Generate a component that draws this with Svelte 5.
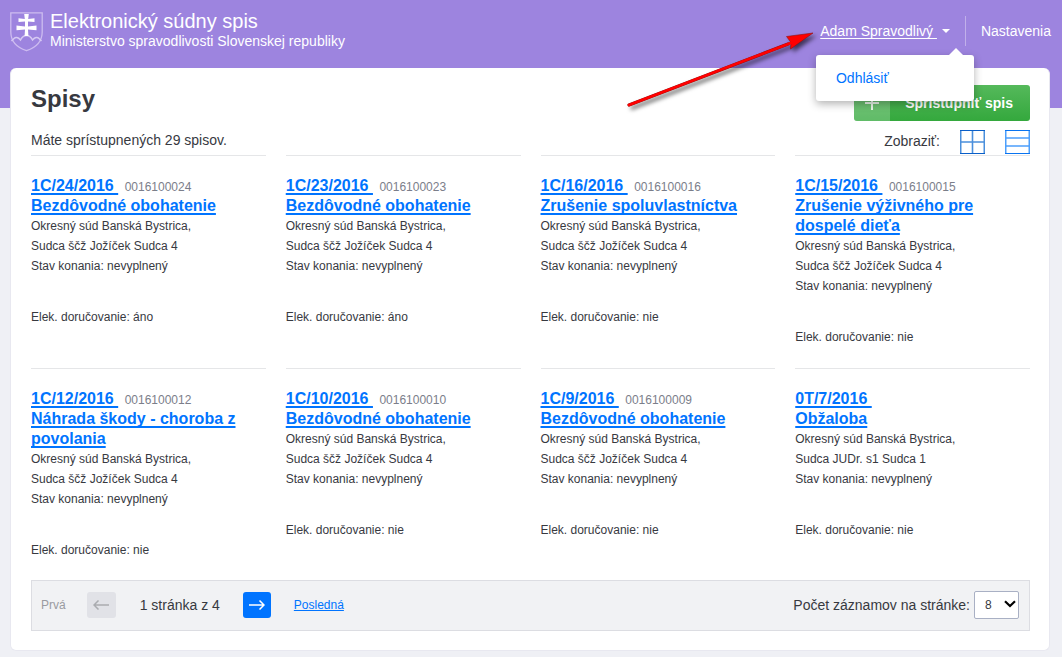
<script>
  const cases = [
    { mark: '1C/24/2016', number: '0016100024', title: 'Bezdôvodné obohatenie', judge: 'Sudca ščž Jožíček Sudca 4', delivery: 'áno' },
    { mark: '1C/23/2016', number: '0016100023', title: 'Bezdôvodné obohatenie', judge: 'Sudca ščž Jožíček Sudca 4', delivery: 'áno' },
    { mark: '1C/16/2016', number: '0016100016', title: 'Zrušenie spoluvlastníctva', judge: 'Sudca ščž Jožíček Sudca 4', delivery: 'nie' },
    { mark: '1C/15/2016', number: '0016100015', title: 'Zrušenie výživného pre dospelé dieťa', judge: 'Sudca ščž Jožíček Sudca 4', delivery: 'nie' },
    { mark: '1C/12/2016', number: '0016100012', title: 'Náhrada škody - choroba z povolania', judge: 'Sudca ščž Jožíček Sudca 4', delivery: 'nie' },
    { mark: '1C/10/2016', number: '0016100010', title: 'Bezdôvodné obohatenie', judge: 'Sudca ščž Jožíček Sudca 4', delivery: 'nie' },
    { mark: '1C/9/2016', number: '0016100009', title: 'Bezdôvodné obohatenie', judge: 'Sudca ščž Jožíček Sudca 4', delivery: 'nie' },
    { mark: '0T/7/2016', number: '', title: 'Obžaloba', judge: 'Sudca JUDr. s1 Sudca 1', delivery: 'nie' }
  ];
  const nbsp = '\u00a0';
  let pageSize = $state('8');
</script>

<div class="page">
  <header class="top">
    <a class="brand" href="#home">
      <svg class="crest" viewBox="0 0 34 40" width="34" height="40" aria-hidden="true">
        <path d="M.8 .8H32.2V20C32.2 29.500 26 35.500 16.500 38.700C7 35.500 .8 29.500 .8 20Z" fill="none" stroke="#cdbcf0" stroke-width="1.300" />
        <path d="M1.500 29L4 26.500C5.500 25 8 25 10.500 28C12 25 14 23.500 16.500 23.500S21 25 22.500 28C25 25 27.500 25 29 26.500L31.500 29" fill="none" stroke="#d6c9f3" stroke-width="1.500" />
        <path d="M14.200 2H18.800L18.200 6.900L24.500 6.200V10L18 9.500V14.400L26.500 13.600V18.200L18 17.400L18.400 24H14.600L15 17.400L6.500 18.200V13.600L15 14.400V9.500L8.500 10V6.200L14.800 6.900Z" fill="#fff" />
      </svg>
      <span class="brand-text">
        <span class="brand-title">Elektronický súdny spis</span>
        <span class="brand-sub">Ministerstvo spravodlivosti Slovenskej republiky</span>
      </span>
    </a>
    <nav class="account">
      <div class="user">
        <button class="user-toggle" type="button" aria-expanded="true">
          <span class="user-name">Adam Spravodlivý{nbsp}</span>
          <span class="caret"></span>
        </button>
        <div class="menu">
          <a href="#logout">Odhlásiť</a>
        </div>
        <svg class="pointer" viewBox="0 0 200 90" width="200" height="90" aria-hidden="true">
          <g class="pointer-shape">
            <path d="M9 81L168 20" stroke="#8b1010" stroke-width="3.200" stroke-linecap="round" />
            <path d="M166.500 12.500L193 9L170.500 25L171 18.500Z" fill="#f00" stroke="#8b1010" stroke-width=".6" />
            <path d="M9 81L172 18.500" stroke="#f00" stroke-width="2.600" stroke-linecap="round" />
          </g>
        </svg>
      </div>
      <a class="settings" href="#settings">Nastavenia</a>
    </nav>
  </header>

  <main class="panel">
    <div class="heading">
      <h1>Spisy</h1>
      <button class="grant" type="button">
        <span class="grant-icon">
          <svg viewBox="0 0 14 14" width="14" height="14" aria-hidden="true"><path d="M7 0V14M0 7H14" stroke="#fff" stroke-opacity=".85" stroke-width="2" /></svg>
        </span>
        <span class="grant-label">Sprístupniť spis</span>
      </button>
    </div>

    <div class="summary">
      <p>Máte sprístupnených 29 spisov.</p>
      <div class="views">
        <span>Zobraziť:</span>
        <button class="view" type="button" aria-label="Mriežka">
          <svg viewBox="0 0 25 24" width="25" height="24" fill="none">
            <path d="M.7 0V24M24.300 0V24M12.500 0V24M0 12H25" stroke="#4a8fdc" stroke-width="1.600" />
            <path d="M0 .5H25M0 23.500H25" stroke="#0a5fc8" />
          </svg>
        </button>
        <button class="view" type="button" aria-label="Zoznam">
          <svg viewBox="0 0 25 24" width="25" height="24" fill="none">
            <path d="M.7 0V24M24.300 0V24M0 8H25M0 16H25" stroke="#4c9ffc" stroke-width="1.600" />
            <path d="M0 .5H25M0 23.500H25" stroke="#0a74f0" />
          </svg>
        </button>
      </div>
    </div>

    <section class="cases">
      {#each cases as item}
        <article class="case">
          <h2>
            <a href="#case">{item.mark}{nbsp}</a>
            {#if item.number}<span class="number">{item.number}</span>{/if}
            <a class="title" href="#case">{item.title}</a>
          </h2>
          <p>Okresný súd Banská Bystrica,</p>
          <p>{item.judge}</p>
          <p>Stav konania: nevyplnený</p>
          <p class="delivery">Elek. doručovanie: {item.delivery}</p>
        </article>
      {/each}
    </section>

    <footer class="pager">
      <span class="first">Prvá</span>
      <button class="step" type="button" disabled aria-label="Predchádzajúca">
        <svg viewBox="0 0 16 10" width="16" height="10"><path d="M16 5H1M5.500 .5L1 5L5.500 9.500" fill="none" stroke="#aaacb0" stroke-width="1.500" /></svg>
      </button>
      <span class="position">1 stránka z 4</span>
      <button class="step next" type="button" aria-label="Nasledujúca">
        <svg viewBox="0 0 16 10" width="16" height="10"><path d="M0 5H15M10.500 .5L15 5L10.500 9.500" fill="none" stroke="#fff" stroke-width="1.500" /></svg>
      </button>
      <a class="last" href="#last">Posledná</a>
      <div class="size">
        <label for="page-size">Počet záznamov na stránke:</label>
        <span class="select">
          <select id="page-size" bind:value={pageSize}>
            <option value="8">8</option>
            <option value="16">16</option>
            <option value="32">32</option>
          </select>
          <svg class="chevron" viewBox="0 0 12 8" width="12" height="8" aria-hidden="true"><path d="M1 1.200L6 6L11 1.200" fill="none" stroke="#000" stroke-width="2.200" /></svg>
        </span>
      </div>
    </footer>
  </main>
</div>

<style>
  :global(body) {
    margin: 0;
    background: #eff0f5;
  }
  .page {
    font-family: "Liberation Sans", Arial, sans-serif;
    font-size: 14px;
    line-height: 20px;
    color: #37393f;
    padding-bottom: 5px;
  }
  button, select {
    font: inherit;
  }
  button {
    border: 0;
    padding: 0;
    background: none;
    cursor: pointer;
  }
  h1, h2, p {
    margin: 0;
  }
  a {
    text-decoration-skip-ink: none;
  }
  .top {
    display: flex;
    justify-content: space-between;
    align-items: flex-start;
    box-sizing: border-box;
    height: 108px;
    padding: 11px 11px 0 10px;
    background: #9d84df;
    color: #fff;
  }
  .top a {
    color: #fff;
    text-decoration: none;
  }
  .brand {
    display: flex;
    gap: 6px;
  }
  .crest {
    margin-top: 1px;
  }
  .brand-text {
    display: flex;
    flex-direction: column;
  }
  .brand-title {
    font-size: 20px;
  }
  .account {
    display: flex;
    align-items: center;
    padding-top: 5px;
  }
  .user {
    position: relative;
    display: flex;
    align-items: center;
    height: 30px;
    padding-right: 15px;
    border-right: 1px solid #c1b0ea;
  }
  .user-toggle {
    display: flex;
    align-items: center;
    gap: 5px;
    color: #fff;
  }
  .user-name {
    text-decoration: underline;
    text-decoration-skip-ink: none;
    text-underline-offset: 2px;
  }
  .caret {
    border: 4px solid transparent;
    border-top-color: #fff;
    border-bottom: 0;
  }
  .menu {
    position: absolute;
    z-index: 2;
    top: 39px;
    right: -9px;
    box-sizing: border-box;
    width: 158px;
    padding: 13px 20px;
    border-radius: 3px;
    background: #fff;
    box-shadow: 0 3px 9px rgba(0, 0, 0, .3);
  }
  .menu::before {
    content: "";
    position: absolute;
    top: -7px;
    right: 11px;
    border: 7px solid transparent;
    border-top: 0;
    border-bottom-color: #fff;
  }
  .menu a {
    color: #0074ff;
  }
  .pointer {
    position: absolute;
    z-index: 3;
    top: 8px;
    right: 145px;
    overflow: visible;
    pointer-events: none;
  }
  .pointer-shape {
    filter: drop-shadow(3px 3px 2px rgba(0, 0, 0, .6));
  }
  .settings {
    margin-left: 15px;
  }
  .panel {
    margin: -40px 12px 0 10px;
    padding: 17px 19px 19px 20px;
    border: 1px solid #e8e8f0;
    border-top: 0;
    border-radius: 6px;
    background: #fff;
    position: relative;
  }
  .heading {
    display: flex;
    justify-content: space-between;
    align-items: flex-start;
  }
  h1 {
    font-size: 24px;
    line-height: 28px;
  }
  .grant {
    display: flex;
    align-items: stretch;
    height: 36px;
    border-radius: 3px;
    overflow: hidden;
    background: linear-gradient(#55b95b, #34a83d);
    color: #fff;
    font-weight: bold;
  }
  .grant-icon {
    display: flex;
    align-items: center;
    justify-content: center;
    width: 36px;
    background: rgba(255, 255, 255, .22);
  }
  .grant-label {
    padding: 8px 17px 8px 15px;
  }
  .summary {
    display: flex;
    justify-content: space-between;
    align-items: center;
    height: 34px;
  }
  .summary p {
    padding-top: 4px;
  }
  .views {
    display: flex;
    align-items: center;
    gap: 20px;
    padding-top: 8px;
  }
  .views > span {
    padding-bottom: 2px;
  }
  .view {
    display: flex;
  }
  .cases {
    display: grid;
    grid-template-columns: repeat(4, minmax(0, 1fr));
    gap: 1px 20px;
  }
  .case {
    padding: 20px 0;
    border-top: 1px solid #e5e6e8;
    font-size: 12px;
  }
  h2 {
    font-size: 16px;
  }
  h2 a {
    color: #0074ff;
    text-decoration: underline;
    text-decoration-skip-ink: none;
    text-decoration-thickness: 2px;
    text-underline-offset: 2px;
  }
  .title {
    display: block;
  }
  .number {
    margin-left: 2px;
    font-size: 12px;
    line-height: 12px;
    font-weight: normal;
    color: #7b7e8a;
  }
  .delivery {
    margin-top: 31px;
  }
  .pager {
    display: flex;
    align-items: center;
    box-sizing: border-box;
    min-height: 51px;
    padding: 0 10px 1px 9px;
    border: 1px solid #dcdde2;
    background: #f1f2f4;
  }
  .first {
    font-size: 12px;
    color: #999ba0;
  }
  .step {
    display: flex;
    align-items: center;
    justify-content: center;
    width: 29px;
    height: 26px;
    margin: 0 24px 0 21px;
    border-radius: 3px;
    background: #e1e2e7;
  }
  .next {
    width: 28px;
    margin: 0 23px 0 0;
    background: #0074ff;
  }
  .position {
    margin-right: 23px;
  }
  .last {
    font-size: 12px;
    color: #0074ff;
  }
  .size {
    display: flex;
    align-items: center;
    gap: 4px;
    margin-left: auto;
  }
  .select {
    position: relative;
    display: flex;
  }
  select {
    appearance: none;
    width: 45px;
    height: 28px;
    padding: 0 0 0 10px;
    border: 1px solid #a9b0c4;
    border-radius: 2px;
    background: #fff;
    color: #37393f;
    font-size: 12px;
  }
  .chevron {
    position: absolute;
    top: 9px;
    right: 3px;
    pointer-events: none;
  }
</style>
